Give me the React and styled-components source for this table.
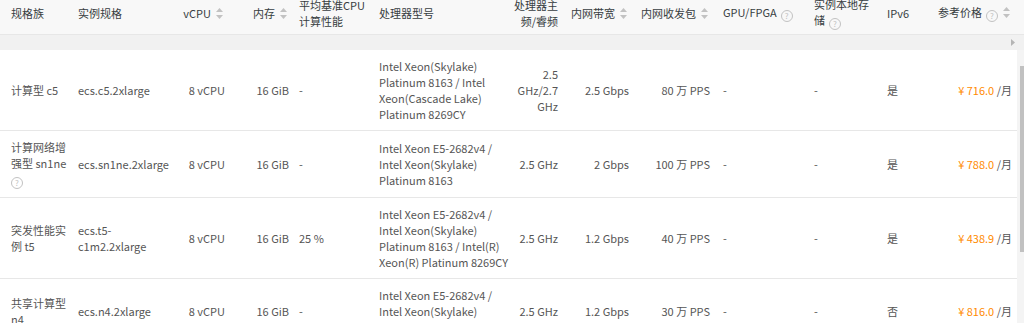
import React from 'react';
import styled, { createGlobalStyle } from 'styled-components';

const colors = {
  headBg: '#f8f8f8',
  strip: '#f1f1f1',
  border: '#e7e7e7',
  head: '#373d41',
  text: '#555',
  muted: '#c2c2c2',
  price: '#ff8a00',
  thumb: '#c1c1c1'
};

const GlobalStyle = createGlobalStyle`
  body {
    margin: 0;
    background: #fff;
    font-family: "Noto Sans CJK SC", "Noto Sans", sans-serif;
  }
`;

// column widths, left to right
const widths = [73, 97, 60, 64, 80, 140, 49, 71, 81, 94, 73, 48, 87];

const columns = [
  { title: '规格族', pl: 11 },
  { title: '实例规格' },
  { title: 'vCPU', align: 'right', sort: true },
  { title: '内存', align: 'right', sort: true },
  { title: '平均基准CPU计算性能' },
  { title: '处理器型号', pr: 0 },
  { title: '处理器主频/睿频', align: 'right', pl: 0 },
  { title: '内网带宽', align: 'right', sort: true },
  { title: '内网收发包', align: 'right', sort: true },
  { title: 'GPU/FPGA', help: true, pl: 8 },
  { title: '实例本地存储', help: true },
  { title: 'IPv6' },
  { title: '参考价格', align: 'right', help: true, sort: true, nowrap: true }
];

const rows = [
  {
    family: '计算型 c5',
    spec: 'ecs.c5.2xlarge',
    base: '-',
    cpu: 'Intel Xeon(Skylake) Platinum 8163 / Intel Xeon(Cascade Lake) Platinum 8269CY',
    freq: '2.5 GHz/2.7 GHz',
    bw: '2.5 Gbps',
    pps: '80 万 PPS',
    ipv6: '是',
    price: '716.0'
  },
  {
    family: '计算网络增强型 sn1ne',
    help: true,
    spec: 'ecs.sn1ne.2xlarge',
    base: '-',
    cpu: 'Intel Xeon E5-2682v4 / Intel Xeon(Skylake) Platinum 8163',
    freq: '2.5 GHz',
    bw: '2 Gbps',
    pps: '100 万 PPS',
    ipv6: '是',
    price: '788.0'
  },
  {
    family: '突发性能实例 t5',
    spec: 'ecs.t5-c1m2.2xlarge',
    base: '25 %',
    cpu: 'Intel Xeon E5-2682v4 / Intel Xeon(Skylake) Platinum 8163 / Intel(R) Xeon(R) Platinum 8269CY',
    freq: '2.5 GHz',
    bw: '1.2 Gbps',
    pps: '40 万 PPS',
    ipv6: '是',
    price: '438.9'
  },
  {
    family: '共享计算型 n4',
    spec: 'ecs.n4.2xlarge',
    base: '-',
    cpu: 'Intel Xeon E5-2682v4 / Intel Xeon(Skylake) Platinum 8163',
    freq: '2.5 GHz',
    bw: '1.2 Gbps',
    pps: '30 万 PPS',
    ipv6: '否',
    price: '816.0'
  }
];

const SortIcon = () => (
  <SortSvg width="7" height="11" viewBox="0 0 7 11">
    <polygon points="3.5,0 7,4 0,4" fill={colors.muted} />
    <polygon points="0,7 7,7 3.5,11" fill={colors.muted} />
  </SortSvg>
);

const ColGroup = () => (
  <colgroup>
    {widths.map((w, i) => (
      <col key={i} style={{ width: w }} />
    ))}
  </colgroup>
);

const App = () => {
  return (
    <>
      <GlobalStyle />
      <Frame>
        <HeadClip>
          <Table>
            <ColGroup />
            <thead>
              <tr>
                {columns.map((c, i) => (
                  <HeadCell
                    key={i}
                    $align={c.align}
                    $pl={c.pl}
                    $pr={c.pr}
                    $nowrap={c.nowrap}
                  >
                    {c.title}
                    {c.help && <Help>?</Help>}
                    {c.sort && <SortIcon />}
                  </HeadCell>
                ))}
              </tr>
            </thead>
          </Table>
        </HeadClip>
        <Strip>
          <ArrowRight width="4" height="7" viewBox="0 0 4 7">
            <polygon points="0,0 4,3.5 0,7" fill="#b5b5b5" />
          </ArrowRight>
        </Strip>
        <BodyRow>
          <BodyClip>
            <Table>
              <ColGroup />
              <tbody>
                {rows.map((r, i) => (
                  <tr key={i}>
                    <Cell $pl={11}>
                      {r.family}
                      {r.help && (
                        <>
                          <br />
                          <Help $flush>?</Help>
                        </>
                      )}
                    </Cell>
                    <Cell>{r.spec}</Cell>
                    <Cell $align="right">8 vCPU</Cell>
                    <Cell $align="right">16 GiB</Cell>
                    <Cell>{r.base}</Cell>
                    <Cell $pr={0}>{r.cpu}</Cell>
                    <Cell $align="right" $pl={0}>{r.freq}</Cell>
                    <Cell $align="right">{r.bw}</Cell>
                    <Cell $align="right">{r.pps}</Cell>
                    <Cell $pl={8}>-</Cell>
                    <Cell>-</Cell>
                    <Cell>{r.ipv6}</Cell>
                    <Cell $align="right">
                      <Price>¥ {r.price}</Price> /月
                    </Cell>
                  </tr>
                ))}
              </tbody>
            </Table>
          </BodyClip>
          <ScrollTrack>
            <ScrollThumb />
          </ScrollTrack>
        </BodyRow>
      </Frame>
    </>
  );
};

const Frame = styled.div`
  width: 1024px;
  height: 323px;
  overflow: hidden;
  display: flex;
  flex-direction: column;
  background: #fff;
`;

const HeadClip = styled.div`
  height: 35px;
  flex-shrink: 0;
  overflow: hidden;
  display: flex;
  flex-direction: column;
  justify-content: flex-end;
  background: ${colors.headBg};
  border-bottom: 1px solid ${colors.border};
  box-sizing: border-box;
`;

const Table = styled.table`
  width: 1017px;
  table-layout: fixed;
  border-collapse: collapse;
  font-size: 11px;
  line-height: 16px;
`;

const pad = (v, d) => (v === undefined ? d : v);

const HeadCell = styled.th`
  height: 43px;
  padding: 0 ${p => pad(p.$pr, 5)}px 0 ${p => pad(p.$pl, 5)}px;
  text-align: ${p => p.$align || 'left'};
  vertical-align: middle;
  font-weight: normal;
  color: ${colors.head};
  word-break: break-all;
  white-space: ${p => (p.$nowrap ? 'nowrap' : 'normal')};
`;

const SortSvg = styled.svg`
  display: inline-block;
  margin-left: 5px;
  margin-right: 2px;
  vertical-align: -1px;
`;

const Help = styled.span`
  display: inline-flex;
  align-items: center;
  justify-content: center;
  width: 10px;
  height: 10px;
  margin-left: ${p => (p.$flush ? 0 : 4)}px;
  border: 1px solid ${colors.muted};
  border-radius: 50%;
  font-size: 8px;
  line-height: 1;
  color: ${colors.muted};
  vertical-align: -2px;
`;

const Strip = styled.div`
  height: 15px;
  flex-shrink: 0;
  display: flex;
  align-items: center;
  justify-content: flex-end;
  padding-right: 9px;
  background: ${colors.strip};
`;

const ArrowRight = styled.svg`
  display: block;
`;

const BodyRow = styled.div`
  flex: 1;
  display: flex;
  min-height: 0;
`;

const BodyClip = styled.div`
  width: 1017px;
  overflow: hidden;
`;

const Cell = styled.td`
  padding: 8px ${p => pad(p.$pr, 5)}px 8px ${p => pad(p.$pl, 5)}px;
  text-align: ${p => p.$align || 'left'};
  vertical-align: middle;
  color: ${colors.text};
  border-bottom: 1px solid ${colors.border};
`;

const Price = styled.span`
  color: ${colors.price};
`;

const ScrollTrack = styled.div`
  width: 7px;
  display: flex;
  justify-content: flex-end;
  padding-top: 16px;
  background: #f4f4f4;
`;

const ScrollThumb = styled.div`
  width: 4px;
  height: 186px;
  background: ${colors.thumb};
`;

export default App;
